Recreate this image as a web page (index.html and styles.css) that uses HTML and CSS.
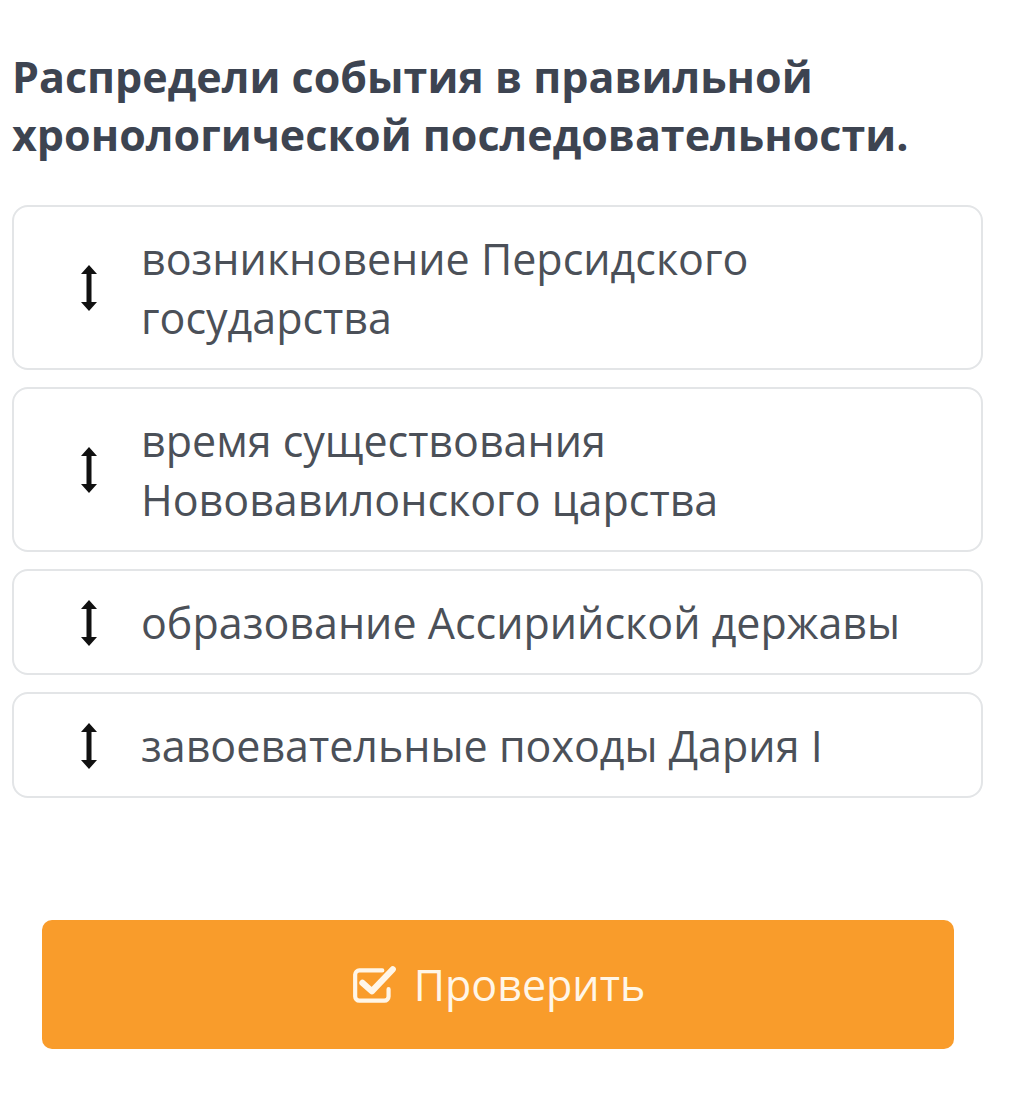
FILE: index.html
```html
<!DOCTYPE html>
<html lang="ru">
<head>
    <meta charset="UTF-8">
    <meta name="viewport" content="width=device-width, initial-scale=1.0">
    <title>Хронология</title>
    <link rel="stylesheet" href="styles.css">
</head>
<body>
    <div class="task">
        <h1>Распредели события в правильной хронологической последовательности.</h1>
        <div class="items">
            <div class="item">
                <span class="handle">
                    <svg width="18" height="46" viewBox="0 0 18 46"><path d="M9 0 L17 9 L11.5 9 L11.5 37 L17 37 L9 46 L1 37 L6.5 37 L6.5 9 L1 9 Z" fill="#111"/></svg>
                </span>
                <span class="label">возникновение Персидского государства</span>
            </div>
            <div class="item">
                <span class="handle">
                    <svg width="18" height="46" viewBox="0 0 18 46"><path d="M9 0 L17 9 L11.5 9 L11.5 37 L17 37 L9 46 L1 37 L6.5 37 L6.5 9 L1 9 Z" fill="#111"/></svg>
                </span>
                <span class="label">время существования Нововавилонского царства</span>
            </div>
            <div class="item">
                <span class="handle">
                    <svg width="18" height="46" viewBox="0 0 18 46"><path d="M9 0 L17 9 L11.5 9 L11.5 37 L17 37 L9 46 L1 37 L6.5 37 L6.5 9 L1 9 Z" fill="#111"/></svg>
                </span>
                <span class="label">образование Ассирийской державы</span>
            </div>
            <div class="item">
                <span class="handle">
                    <svg width="18" height="46" viewBox="0 0 18 46"><path d="M9 0 L17 9 L11.5 9 L11.5 37 L17 37 L9 46 L1 37 L6.5 37 L6.5 9 L1 9 Z" fill="#111"/></svg>
                </span>
                <span class="label">завоевательные походы Дария I</span>
            </div>
        </div>
        <button class="check-btn">
            <svg width="48" height="40" viewBox="0 0 46 38">
                <path d="M30 5 H8 a4 4 0 0 0 -4 4 V30 a4 4 0 0 0 4 4 H32 a4 4 0 0 0 4 -4 V23" fill="none" stroke="#fff6e8" stroke-width="4" stroke-linecap="round"/>
                <path d="M11 17 L20 25 L40 4" fill="none" stroke="#fff6e8" stroke-width="6" stroke-linecap="round" stroke-linejoin="round"/>
            </svg>
            <span>Проверить</span>
        </button>
    </div>
</body>
</html>
```

FILE: styles.css
```css
body {
    margin: 0;
    background-color: #fff;
    font-family: "Open Sans", "Noto Sans", sans-serif;
}
.task {
    padding: 48px 27px 0 12px;
}
h1 {
    margin: 0 0 41px 0;
    font-size: 43px;
    line-height: 58px;
    font-weight: 700;
    color: #3d4451;
    padding-right: 40px;
}
.items {
    display: flex;
    flex-direction: column;
    gap: 17px;
}
.item {
    display: flex;
    align-items: center;
    border: 2px solid #e3e5e7;
    border-radius: 16px;
    padding: 22px 20px 21px 0;
}
.handle {
    width: 127px;
    flex-shrink: 0;
    display: flex;
}
.handle svg {
    margin-left: 66px;
    display: block;
}
.label {
    font-size: 43px;
    line-height: 59px;
    color: #4b5058;
}
.check-btn {
    display: flex;
    align-items: center;
    justify-content: center;
    gap: 15px;
    width: 912px;
    height: 129px;
    margin: 122px 0 0 30px;
    border: none;
    border-radius: 10px;
    background-color: #f99c2b;
    color: #fff6e8;
    font-family: "Open Sans", "Noto Sans", sans-serif;
    font-size: 43px;
    cursor: pointer;
}
.check-btn svg {
    display: block;
}
```
